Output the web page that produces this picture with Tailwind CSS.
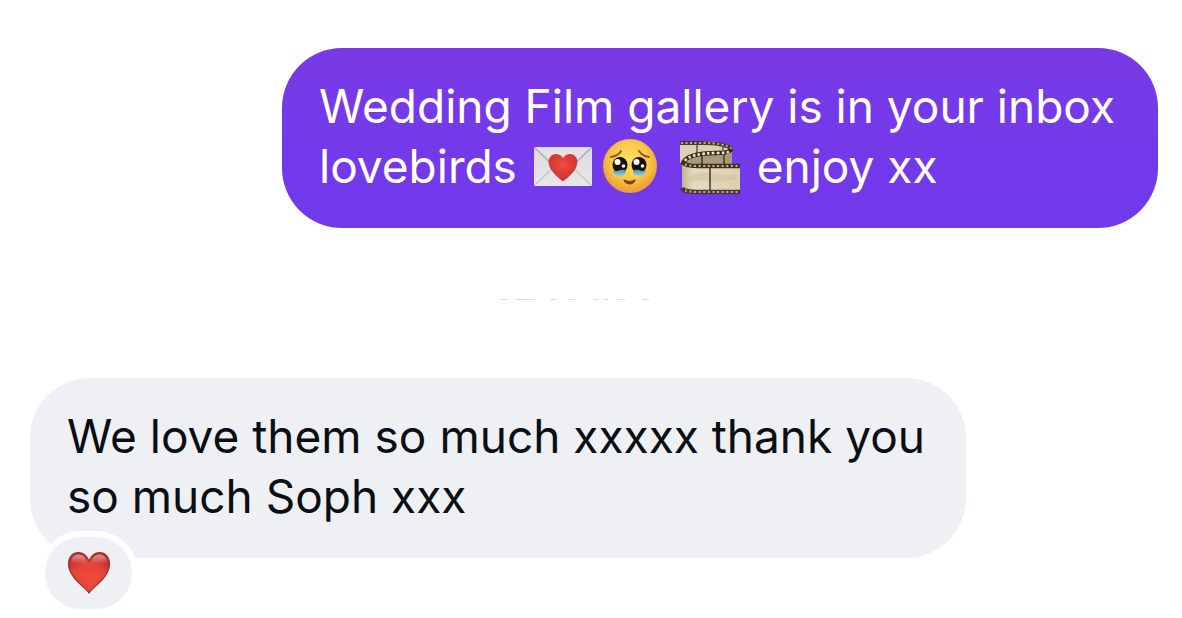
<!DOCTYPE html>
<html lang="en">
<head>
    <meta charset="UTF-8">
    <meta name="viewport" content="width=device-width, initial-scale=1.0">
    <title>Messages</title>
    <script src="https://cdn.jsdelivr.net/npm/@tailwindcss/browser@4"></script>
</head>
<body class="bg-white font-['Inter',sans-serif] text-[46px] leading-[60px]">
    <main class="flex flex-col min-h-screen pt-12 pl-[30px] pr-6 pb-[60px]">

        <!-- sent -->
        <div class="self-end rounded-[60px] bg-linear-to-b from-[#783ae6] to-[#7039ed] text-white pt-7 pb-8 pl-[37px] pr-[43px]">
            <p>Wedding Film gallery is in your inbox<br>
                lovebirds <svg class="inline-block align-top w-[67px] h-[60px]" viewBox="2 -2 67 60" role="img" aria-label="love letter">
                    <defs>
                        <linearGradient id="paper" x1="0" y1="0" x2="0" y2="1">
                            <stop offset="0" stop-color="#dcdadf"/>
                            <stop offset="1" stop-color="#e9e7ea"/>
                        </linearGradient>
                        <radialGradient id="seal" cx=".5" cy=".4" r=".6">
                            <stop offset="0" stop-color="#ee4d43"/>
                            <stop offset="1" stop-color="#cf2f2c"/>
                        </radialGradient>
                    </defs>
                    <rect x="6" y="9" width="58" height="39" rx="1.5" fill="url(#paper)"/>
                    <path d="M7 47L27 28M63 47L43 28" stroke="#c6c4ca" stroke-width="1.2" fill="none"/>
                    <path d="M7 10L31 33Q35 37 39 33L63 10Z" fill="#e3e1e5"/>
                    <path d="M7 10L31 33Q35 37 39 33L63 10" stroke="#aaa8b0" stroke-width="1.2" fill="none"/>
                    <path d="M35 43C28 38 21 31 21 24C21 19 24 16.500 28 16.500C31.500 16.500 34 18.500 35 21C36 18.500 38.500 16.500 42 16.500C46 16.500 49 19 49 24C49 31 42 38 35 43Z" fill="url(#seal)" stroke="#b9423c" stroke-width=".8"/>
                </svg><svg class="inline-block align-top w-[67px] h-[60px]" viewBox="2 -2 67 60" role="img" aria-label="face holding back tears">
                    <defs>
                        <radialGradient id="face" cx=".5" cy=".4" r=".6">
                            <stop offset="0" stop-color="#ffe36b"/>
                            <stop offset=".55" stop-color="#fcc84a"/>
                            <stop offset="1" stop-color="#ea9931"/>
                        </radialGradient>
                        <linearGradient id="tear" x1="0" y1="0" x2="0" y2="1">
                            <stop offset="0" stop-color="#3d91b5"/>
                            <stop offset="1" stop-color="#a3d4d2"/>
                        </linearGradient>
                    </defs>
                    <circle cx="35" cy="28" r="27" fill="url(#face)"/>
                    <path d="M16 19Q23 18 26 13M44 13Q47 18 54 19" stroke="#87561c" stroke-width="1.8" fill="none" stroke-linecap="round"/>
                    <ellipse cx="25" cy="27" rx="7.500" ry="8" fill="#19120f"/>
                    <ellipse cx="44" cy="27" rx="7.500" ry="8" fill="#19120f"/>
                    <path d="M18 32Q21 34 25 32Q29 31 31 33Q30 38 25 38Q19 38 18 32Z" fill="url(#tear)"/>
                    <path d="M51 32Q48 34 44 32Q40 31 38 33Q39 38 44 38Q50 38 51 32Z" fill="url(#tear)"/>
                    <circle cx="22.500" cy="24" r="3" fill="#fff"/>
                    <circle cx="41.500" cy="24" r="3" fill="#fff"/>
                    <circle cx="28.500" cy="28" r="1.800" fill="#eaf5f8"/>
                    <circle cx="47.500" cy="28" r="1.800" fill="#eaf5f8"/>
                    <path d="M29 42Q35 45 40 42Q38 46 35 46Q31 46 29 42Z" fill="#754218" stroke="#754218" stroke-width="1.200" stroke-linejoin="round"/>
                </svg> <svg class="inline-block align-top w-[67px] h-[60px]" viewBox="2 -2 67 60" role="img" aria-label="film frames">
                    <defs>
                        <linearGradient id="film" x1="0" y1="0" x2="1" y2="0">
                            <stop offset="0" stop-color="#c4b594"/>
                            <stop offset=".2" stop-color="#e4dac0"/>
                            <stop offset="1" stop-color="#ddd0b0"/>
                        </linearGradient>
                    </defs>
                    <!-- back turn -->
                    <path d="M5 3H30Q53 4 57 10V25H5Z" fill="#ddd1b4"/>
                    <path d="M22 5V17M48 9V14" stroke="#4a3d2a" stroke-width="1.200"/>
                    <path d="M5 5H28Q50 5 57 11" stroke="#493a2f" stroke-width="4" fill="none"/>
                    <path d="M6 5H28Q50 5 57 11" stroke="#b9aa92" stroke-width="2" stroke-dasharray="2 2.500" fill="none"/>
                    <!-- inner turn -->
                    <path d="M57 10V27H7Q8 18 25 15Q40 12 57 12Z" fill="#a89b7d"/>
                    <path d="M27 16V28M49 14V27" stroke="#43371f" stroke-width="1.500"/>
                    <path d="M56 11Q55 15 43 15Q10 15 8 26" stroke="#352a1b" stroke-width="4.500" fill="none"/>
                    <path d="M54 14Q49 15 43 15Q14 15 9 24" stroke="#f0e6c8" stroke-width="2.600" stroke-dasharray="2.600 2.200" fill="none"/>
                    <!-- front turn -->
                    <path d="M7 24Q9 27 20 27H65V56H20Q8 55 7 50Z" fill="url(#film)"/>
                    <path d="M12 40Q25 32 39 35Q50 39 62 36V42Q45 44 33 43Q23 41 12 44Z" fill="#cfc09c" opacity=".5"/>
                    <path d="M35 28V54" stroke="#43371f" stroke-width="1.500"/>
                    <path d="M7 24Q10 28 22 28H65" stroke="#3d301f" stroke-width="4.500" fill="none"/>
                    <path d="M10 26.500Q14 28 22 28H65" stroke="#c9ba98" stroke-width="2" stroke-dasharray="2 2.600" fill="none"/>
                    <path d="M7 50Q9 54 22 54H65" stroke="#493a35" stroke-width="4.500" fill="none"/>
                    <path d="M10 52.500Q14 54 22 54H65" stroke="#b9a99b" stroke-width="2" stroke-dasharray="2 2.600" fill="none"/>
                </svg> enjoy xx</p>
        </div>

        <!-- divider, only the tips show -->
        <div class="flex justify-center h-[150px] pt-[70px] pr-10">
            <svg class="w-[152px] h-[3px]" viewBox="0 0 152 3" aria-hidden="true">
                <path d="M2 1.500H10M17 1.500H37M52 1.500H59M70 1.500H77M96 1.500H101M105 1.500H110M119 1.500H127M144 1.500H151" stroke="#dededf" stroke-width="1" fill="none"/>
            </svg>
        </div>

        <!-- received -->
        <div class="relative self-start rounded-[60px] bg-[#eff0f4] text-[#0a0f14] pt-7 pb-8 pl-[37px] pr-[41px]">
            <p>We love them so much xxxxx thank you<br>so much Soph xxx</p>
            <button type="button" aria-label="Heart reaction" class="absolute left-[9px] -bottom-[57px] flex items-center justify-center w-[99px] h-[84px] rounded-full border-6 border-white bg-[#eff0f4]">
                <svg class="w-[44px] h-[44px]" viewBox="0 0 44 44" aria-hidden="true">
                    <defs>
                        <radialGradient id="heart" cx=".5" cy=".65" r=".62">
                            <stop offset="0" stop-color="#f14b35"/>
                            <stop offset=".6" stop-color="#e5443a"/>
                            <stop offset="1" stop-color="#bd302f"/>
                        </radialGradient>
                        <linearGradient id="shine" x1="0" y1="0" x2="0" y2="1">
                            <stop offset="0" stop-color="#fff" stop-opacity=".5"/>
                            <stop offset="1" stop-color="#fff" stop-opacity="0"/>
                        </linearGradient>
                    </defs>
                    <path d="M22 42C17 35 1.500 26 1.500 13C1.500 6 6 1.500 11.500 1.500C17 1.500 20 5 22 10C24 5 27 1.500 32.500 1.500C38 1.500 42.500 6 42.500 13C42.500 26 27 35 22 42Z" fill="url(#heart)" stroke="#963331" stroke-width="1.200"/>
                    <path d="M4 13C4 7 7 3.500 11.500 3.500C16 3.500 19 7 20 13Q12 10 4 13Z" fill="url(#shine)"/>
                    <path d="M40 13C40 7 37 3.500 32.500 3.500C28 3.500 25 7 24 13Q32 10 40 13Z" fill="url(#shine)"/>
                </svg>
            </button>
        </div>

    </main>
</body>
</html>
